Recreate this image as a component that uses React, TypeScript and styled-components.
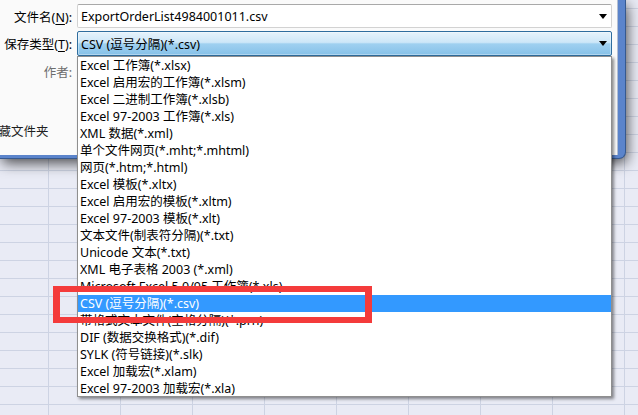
import React from 'react';
import styled, { createGlobalStyle } from 'styled-components';

const FONT = '"Noto Sans", "Noto Sans CJK SC", sans-serif';

const FILE_TYPES = [
  'Excel 工作簿(*.xlsx)',
  'Excel 启用宏的工作簿(*.xlsm)',
  'Excel 二进制工作簿(*.xlsb)',
  'Excel 97-2003 工作簿(*.xls)',
  'XML 数据(*.xml)',
  '单个文件网页(*.mht;*.mhtml)',
  '网页(*.htm;*.html)',
  'Excel 模板(*.xltx)',
  'Excel 启用宏的模板(*.xltm)',
  'Excel 97-2003 模板(*.xlt)',
  '文本文件(制表符分隔)(*.txt)',
  'Unicode 文本(*.txt)',
  'XML 电子表格 2003 (*.xml)',
  'Microsoft Excel 5.0/95 工作簿(*.xls)',
  'CSV (逗号分隔)(*.csv)',
  '带格式文本文件(空格分隔)(*.prn)',
  'DIF (数据交换格式)(*.dif)',
  'SYLK (符号链接)(*.slk)',
  'Excel 加载宏(*.xlam)',
  'Excel 97-2003 加载宏(*.xla)',
];

const SELECTED = 14;

const GlobalStyle = createGlobalStyle`
  html, body {
    margin: 0;
    padding: 0;
  }
  body {
    width: 638px;
    height: 415px;
    overflow: hidden;
    font-family: ${FONT};
  }
`;

const DropArrow: React.FC = () => (
  <svg width="8" height="5" viewBox="0 0 8 5">
    <polygon points="0,0 8,0 4,5" fill="#000" />
  </svg>
);

const App: React.FC = () => {
  return (
    <Screen>
      <GlobalStyle />
      <Window>
        <Body>
          <Form>
            <Label>
              文件名(<u>N</u>):
            </Label>
            <TextCombo>
              <span>ExportOrderList4984001011.csv</span>
              <DropArrow />
            </TextCombo>
            <Label>
              保存类型(<u>T</u>):
            </Label>
            <TypeCombo>
              <span>CSV (逗号分隔)(*.csv)</span>
              <DropArrow />
            </TypeCombo>
            <Label muted>作者:</Label>
            <div />
          </Form>
          <Footer>
            <HideFolders>隐藏文件夹</HideFolders>
          </Footer>
        </Body>
      </Window>

      <TypeList>
        {FILE_TYPES.map((t, i) => (
          <TypeItem key={t} selected={i === SELECTED}>
            {t}
          </TypeItem>
        ))}
      </TypeList>
      <Highlight />
    </Screen>
  );
};

const Screen = styled.div`
  position: relative;
  width: 638px;
  height: 415px;
  overflow: hidden;
  background-color: #e9ebf5;
  background-image: linear-gradient(to right, #cdd3e3 1px, transparent 1px),
    linear-gradient(to bottom, #cdd3e3 1px, transparent 1px);
  background-size: 72px 18px;
  background-position: 48px 8px;
  font-family: ${FONT};
  font-size: 12.5px;
  color: #000;
`;

const Window = styled.div`
  width: 625px;
  height: 158px;
  box-sizing: border-box;
  border-right: 7px solid #5b84cb;
  border-bottom: 3px solid #5b84cb;
  border-bottom-right-radius: 6px;
  background: #fafafa;
  box-shadow: 0 0 0 1px #36598f, 2px 5px 14px rgba(0, 0, 0, 0.7);
  overflow: hidden;
`;

const Body = styled.div`
  height: 100%;
  box-sizing: border-box;
  border-right: 1px solid #b4bfd2;
  padding: 4px 5px 0 0;
  display: flex;
  flex-direction: column;
`;

const Form = styled.div`
  display: grid;
  grid-template-columns: 72px 1fr;
  grid-template-rows: 24px 25px 24px;
  column-gap: 5px;
  row-gap: 3px;
  align-items: center;
`;

const Label = styled.div<{ muted?: boolean }>`
  text-align: right;
  white-space: nowrap;
  color: ${(p) => (p.muted ? '#6d6d6d' : '#000')};

  u {
    text-underline-offset: 2px;
  }
`;

const Combo = styled.div`
  height: 100%;
  box-sizing: border-box;
  display: flex;
  align-items: center;
  justify-content: space-between;
  padding: 0 4px 0 3px;
  border-radius: 2px;
  white-space: nowrap;

  svg {
    flex-shrink: 0;
  }
`;

const TextCombo = styled(Combo)`
  background: #fff;
  border: 1px solid #d2d2d2;
  border-top-color: #a9a9a9;
`;

const TypeCombo = styled(Combo)`
  border: 1px solid #2f6d9e;
  background: linear-gradient(
    to bottom,
    #e6f3fc 0%,
    #cde7f8 45%,
    #9fd0f0 52%,
    #86c1e8 100%
  );
  box-shadow: inset 0 0 0 1px rgba(255, 255, 255, 0.35);
`;

const Footer = styled.div`
  margin-top: 38px;
  height: 18px;
  display: flex;
  align-items: center;
`;

const HideFolders = styled.span`
  margin-left: -14px;
  white-space: nowrap;
  color: #1e1e1e;
`;

const TypeList = styled.ul`
  position: absolute;
  left: 77px;
  top: 56px;
  width: 535px;
  height: 341px;
  margin: 0;
  padding: 0;
  list-style: none;
  box-sizing: border-box;
  background: #fff;
  border: 1px solid #8f8f8f;
  box-shadow: 2px 2px 3px rgba(0, 0, 0, 0.45);
`;

const TypeItem = styled.li<{ selected?: boolean }>`
  height: 17px;
  line-height: 17px;
  padding-left: 2px;
  white-space: nowrap;
  background: ${(p) => (p.selected ? '#3399ff' : 'transparent')};
  color: ${(p) => (p.selected ? '#fff' : '#000')};
`;

const Highlight = styled.div`
  position: absolute;
  left: 53px;
  top: 286px;
  width: 319px;
  height: 37px;
  box-sizing: border-box;
  border: solid #f43b3b;
  border-width: 6px 7px;
`;

export default App;
